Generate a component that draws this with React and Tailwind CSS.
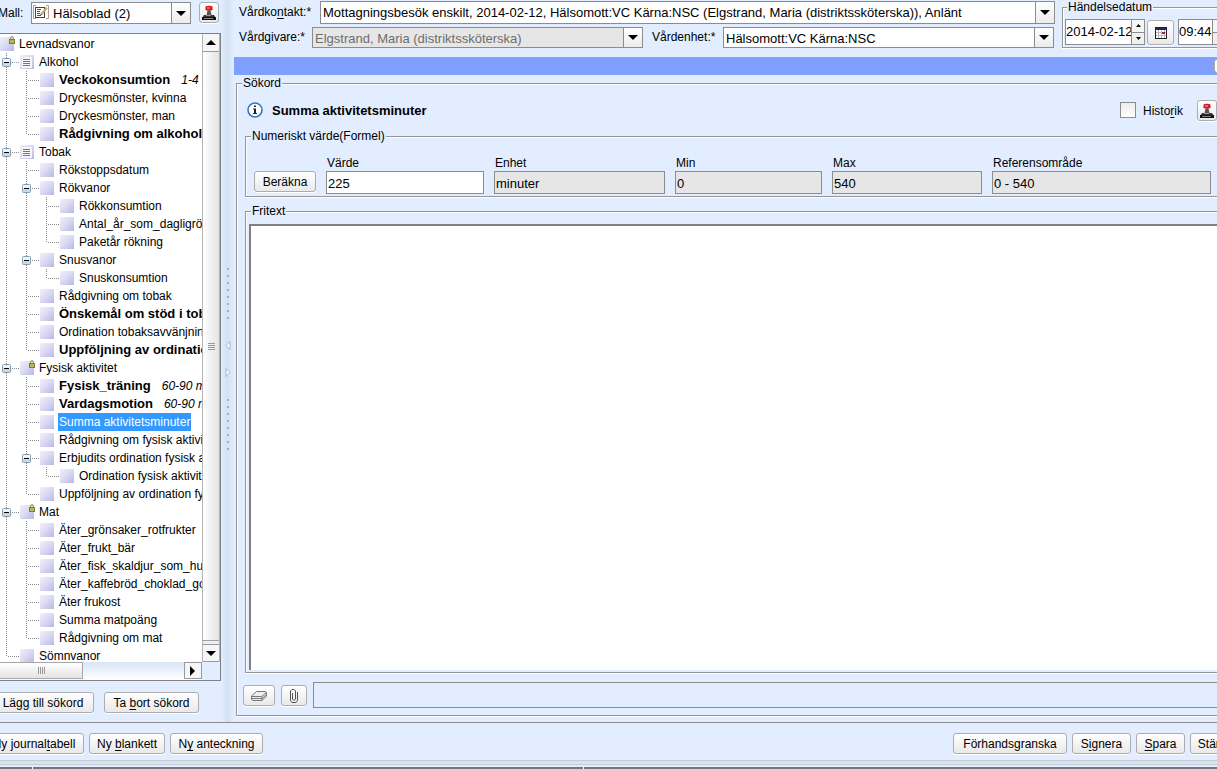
import React from "react";

const TREE = [
  { d: 0, t: "Levnadsvanor", icon: "lock" },
  { d: 1, t: "Alkohol", icon: "list", open: true },
  { d: 2, t: "Veckokonsumtion", bold: true, note: "1-4 glas" },
  { d: 2, t: "Dryckesmönster, kvinna" },
  { d: 2, t: "Dryckesmönster, man" },
  { d: 2, t: "Rådgivning om alkohol", bold: true },
  { d: 1, t: "Tobak", icon: "list", open: true },
  { d: 2, t: "Rökstoppsdatum" },
  { d: 2, t: "Rökvanor", open: true },
  { d: 3, t: "Rökkonsumtion" },
  { d: 3, t: "Antal_år_som_dagligrökare" },
  { d: 3, t: "Paketår rökning" },
  { d: 2, t: "Snusvanor", open: true },
  { d: 3, t: "Snuskonsumtion" },
  { d: 2, t: "Rådgivning om tobak" },
  { d: 2, t: "Önskemål om stöd i tobak", bold: true },
  { d: 2, t: "Ordination tobaksavvänjning" },
  { d: 2, t: "Uppföljning av ordination", bold: true },
  { d: 1, t: "Fysisk aktivitet", icon: "lock", open: true },
  { d: 2, t: "Fysisk_träning", bold: true, note: "60-90 min" },
  { d: 2, t: "Vardagsmotion", bold: true, note: "60-90 min" },
  { d: 2, t: "Summa aktivitetsminuter", selected: true },
  { d: 2, t: "Rådgivning om fysisk aktivitet" },
  { d: 2, t: "Erbjudits ordination fysisk aktivitet", open: true },
  { d: 3, t: "Ordination fysisk aktivitet" },
  { d: 2, t: "Uppföljning av ordination fysisk" },
  { d: 1, t: "Mat", icon: "lock", open: true },
  { d: 2, t: "Äter_grönsaker_rotfrukter" },
  { d: 2, t: "Äter_frukt_bär" },
  { d: 2, t: "Äter_fisk_skaldjur_som_huvudrätt" },
  { d: 2, t: "Äter_kaffebröd_choklad_godis" },
  { d: 2, t: "Äter frukost" },
  { d: 2, t: "Summa matpoäng" },
  { d: 2, t: "Rådgivning om mat" },
  { d: 1, t: "Sömnvanor" },
];

// True when a later sibling exists for the branch at the given level.
function continues(index, level) {
  for (let i = index + 1; i < TREE.length; i++) {
    if (TREE[i].d < level) return false;
    if (TREE[i].d === level) return true;
  }
  return false;
}

function Guide({ own, more, open }) {
  return (
    <svg width="20" height="18" viewBox="0 0 20 18" className="shrink-0" shapeRendering="crispEdges" aria-hidden="true">
      {(own || more) && (
        <path d={more ? "M6.5 0V18" : "M6.5 0V10"} stroke="#8a8a8a" strokeDasharray="1 1" />
      )}
      {own && <path d="M8 9.5H19" stroke="#8a8a8a" strokeDasharray="1 1" />}
      {open && (
        <g>
          <rect x="2.5" y="5.5" width="8" height="8" rx="1" fill="#f4f4f0" stroke="#7b9ebd" shapeRendering="auto" />
          <rect x="3" y="10" width="7" height="3" fill="#d8d6ce" />
          <path d="M4 9.5H9" stroke="#000" />
        </g>
      )}
    </svg>
  );
}

function NodeIcon({ kind }) {
  return (
    <svg width="15" height="18" viewBox="0 0 15 18" className="shrink-0" aria-hidden="true">
      <defs>
        <linearGradient id="node" x1="0" y1="0" x2="1" y2="1">
          <stop offset="0" stopColor="#f0f0fd" />
          <stop offset="0.5" stopColor="#d9d9f3" />
          <stop offset="1" stopColor="#b8b8e0" />
        </linearGradient>
      </defs>
      <rect x="0" y="2" width="14" height="14" fill="url(#node)" />
      {kind === "list" && (
        <g shapeRendering="crispEdges">
          <rect x="2" y="4" width="10" height="11" fill="#f5f5fa" />
          <path d="M3 6.5H10M3 8.5H10M3 10.5H10M3 12.5H10" stroke="#777" />
        </g>
      )}
      {kind === "lock" && (
        <g>
          <path d="M10.5 5.5V3.5Q10.5 1.5 12 1.5T13.5 3.5V5.5" fill="none" stroke="#8d8d55" />
          <rect x="9.5" y="4.5" width="5" height="4" fill="#b5b65c" stroke="#7e7e32" />
        </g>
      )}
    </svg>
  );
}

function Stamp() {
  return (
    <svg width="16" height="16" viewBox="0 0 16 16" className="shrink-0" aria-hidden="true">
      <path d="M4.500 1.500Q8 0 11.500 1.500V5Q8 6.500 4.500 5Z" fill="#d8141c" />
      <path d="M6 2H9V4H6Z" fill="#ff5a5a" />
      <path d="M6.500 5.500H9.500L10.500 10H5.500Z" fill="#555" />
      <path d="M3 10H13L14.500 12.500H1.500Z" fill="#333" />
      <path d="M5 10.500H10" stroke="#999" />
      <path d="M1 12H15V15H1Z" fill="#111" />
      <path d="M3 13.500H12" stroke="#888" />
    </svg>
  );
}

function Arrow({ dir = "down", small }) {
  const d = {
    down: "M0 0H10L5 5Z",
    up: "M0 5H10L5 0Z",
    right: "M2 0V10L7 5Z",
  }[dir];
  return (
    <svg
      width={small ? 5 : 10}
      height={dir === "right" ? 10 : small ? 3 : 5}
      viewBox={dir === "right" ? "0 0 10 10" : "0 0 10 5"}
      preserveAspectRatio="none"
      aria-hidden="true"
    >
      <path d={d} fill="#000" />
    </svg>
  );
}

function Combo({ id, value, disabled, icon, size = "h-[21px]", label }) {
  return (
    <div className={"flex min-w-0 flex-1 border border-[#8c8c8c] " + size + (disabled ? " bg-[#e6e6e6]" : " bg-white")}>
      {icon}
      <select
        id={id}
        aria-label={label}
        disabled={disabled}
        className={
          "min-w-0 flex-1 appearance-none bg-transparent pt-px pl-[2px] text-[13px] opacity-100 outline-none " +
          (disabled ? "text-[#6e6e6e]" : "text-black")
        }
      >
        <option>{value}</option>
      </select>
      <span className="pointer-events-none flex w-[19px] shrink-0 items-center justify-center border-l border-[#8c8c8c] bg-linear-to-b from-white to-[#ececec]">
        <Arrow />
      </span>
    </div>
  );
}

function Button({ children, className = "" }) {
  return (
    <button
      type="button"
      className={
        "flex h-[21px] shrink-0 items-center justify-center rounded-[3px] border border-[#adadad] bg-linear-to-b from-white to-[#e9e9e9] pt-px text-xs whitespace-nowrap shadow-[0_1px_0_#fff] " +
        className
      }
    >
      {children}
    </button>
  );
}

const U = ({ children }) => <span className="underline underline-offset-2">{children}</span>;

const GROUP =
  "min-w-0 border border-r-0 border-[#969696] shadow-[inset_1px_1px_0_#fff,0_1px_0_#fff]";
const LEGEND = "bg-[#e2eeff] px-px text-xs leading-[15px]";

function Field({ id, label, value, readOnly }) {
  return (
    <div className="flex min-w-0 flex-col">
      <label htmlFor={id} className="px-px pt-px text-xs leading-4">{label}</label>
      <input
        id={id}
        defaultValue={value}
        readOnly={readOnly}
        className={
          "h-[23px] w-full border border-[#8c8c8c] px-px pt-px text-[13px] outline-none " +
          (readOnly ? "bg-[#e6e6e6]" : "bg-white")
        }
      />
    </div>
  );
}

function Spinner() {
  return (
    <span className="flex w-[13px] shrink-0 flex-col border-l border-[#8c8c8c]">
      <button type="button" aria-label="Öka" className="flex flex-1 items-center justify-center bg-[#f6f6f6]">
        <Arrow dir="up" small />
      </button>
      <button type="button" aria-label="Minska" className="flex flex-1 items-center justify-center border-t border-[#8c8c8c] bg-[#f0f0f0]">
        <Arrow small />
      </button>
    </span>
  );
}

function Sidebar() {
  return (
    <aside className="flex w-[221px] shrink-0 flex-col">
      <div className="flex items-start pt-[2px]">
        <label htmlFor="mall" className="-ml-[2px] w-[33px] shrink-0 text-xs leading-[22px]">Mall:</label>
        <Combo
          id="mall"
          value="Hälsoblad (2)"
          size="h-[22px]"
          icon={
            <svg width="19" height="20" viewBox="0 0 19 20" className="shrink-0" aria-hidden="true">
              <path d="M4 2.500H1.500V15.500H4M14 2.500H16.500V15.500H14" fill="none" stroke="#b09a9a" />
              <rect x="3.500" y="4.500" width="9" height="10" fill="#fff" stroke="#444" />
              <path d="M5 6.500H9M5 8.500H8M5 10.500H8M5 12.500H8" stroke="#555" />
              <path d="M9 11.500L15 4.500" stroke="#d0a862" strokeWidth="2" />
              <path d="M8 13L9.500 11" stroke="#333" />
            </svg>
          }
        />
        <Button className="mr-[2px] ml-2 w-5">
          <Stamp />
        </Button>
      </div>

      <div className="mt-[9px] flex min-h-0 flex-1 flex-col border-t border-r border-b border-[#808088] bg-[#e2eeff]">
        <div className="flex min-h-0 flex-1">
          <ul className="min-w-0 flex-1 overflow-hidden bg-white pt-px">
            {TREE.map((n, i) => (
              <li key={n.t} className="flex h-[18px] items-center text-xs whitespace-nowrap">
                {Array.from({ length: n.d }, (_, k) => (
                  <Guide key={k} own={k + 1 === n.d} more={continues(i, k + 1)} open={k + 1 === n.d && n.open} />
                ))}
                <NodeIcon kind={n.icon} />
                <span
                  className={
                    "ml-[3px] px-px leading-[18px] " +
                    (n.bold ? "text-[13px] font-bold " : "") +
                    (n.selected ? "bg-[#3399ff] text-white" : "")
                  }
                >
                  {n.t}
                </span>
                {n.note && <em className="ml-[10px]">{n.note}</em>}
              </li>
            ))}
          </ul>
          <div className="flex w-[18px] flex-col border-x border-[#b4b4b4] bg-[#e8f0fa]">
            <button type="button" aria-label="Rulla upp" className="flex h-[18px] items-center justify-center border-b border-[#9a9a9a] bg-[#f6f6f6]">
              <Arrow dir="up" />
            </button>
            <div className="mb-[3px] flex flex-1 flex-col items-center justify-center gap-px border-b border-[#a0a0a0] bg-linear-to-r from-white to-[#e4e4e4]">
              <span className="h-px w-[7px] bg-[#999]" />
              <span className="h-px w-[7px] bg-[#999]" />
              <span className="h-px w-[7px] bg-[#999]" />
              <span className="h-px w-[7px] bg-[#999]" />
            </div>
            <button type="button" aria-label="Rulla ned" className="flex h-[18px] items-center justify-center border-y border-[#9a9a9a] bg-[#f6f6f6]">
              <Arrow />
            </button>
          </div>
        </div>
        <div className="mr-[18px] flex h-[18px] bg-linear-to-b from-[#d8e6f6] to-white">
          <div className="flex h-[17px] w-[83px] items-center justify-center gap-px border border-l-0 border-[#a8a8a8] bg-linear-to-b from-white to-[#e4e4e4]">
            <span className="h-[7px] w-px bg-[#999]" />
            <span className="h-[7px] w-px bg-[#999]" />
            <span className="h-[7px] w-px bg-[#999]" />
            <span className="h-[7px] w-px bg-[#999]" />
          </div>
          <span className="flex-1" />
          <button type="button" aria-label="Rulla höger" className="flex h-[17px] w-[18px] items-center justify-center border border-[#9a9a9a] bg-[#f6f6f6]">
            <Arrow dir="right" />
          </button>
        </div>
      </div>

      <div className="flex gap-[10px] pt-[11px] pb-[9px]">
        <Button className="-ml-2 w-[102px]">Lägg till sökord</Button>
        <Button className="w-[95px]"><span>Ta <U>b</U>ort sökord</span></Button>
      </div>
    </aside>
  );
}

function Dots({ n }) {
  return (
    <span className="flex flex-col gap-[5px]">
      {Array.from({ length: n }, (_, i) => (
        <span key={i} className="size-[2px] bg-[#a4b0c2]" />
      ))}
    </span>
  );
}

function Splitter() {
  return (
    <div className="flex w-[13px] shrink-0 flex-col items-center justify-center gap-5 bg-linear-to-r from-[#e2eeff] via-[#d3e1f3] to-[#e2eeff] pb-1">
      <Dots n={8} />
      <svg width="6" height="40" viewBox="0 0 6 40" fill="#fff" stroke="#a9b2bf" aria-hidden="true">
        <path d="M5 2.500V10.500L1 6.500Z" />
        <path d="M1 29.500V37.500L5 33.500Z" />
      </svg>
      <Dots n={8} />
    </div>
  );
}

function Header() {
  return (
    <div className="flex gap-[7px]">
      <div className="flex min-w-0 flex-1 flex-col gap-[3px] pt-px pl-[5px]">
        <div className="flex">
          <label htmlFor="kontakt" className="w-[81px] shrink-0 text-xs leading-[23px]">Vårdko<U>n</U>takt:*</label>
          <Combo
            id="kontakt"
            size="h-[23px]"
            value="Mottagningsbesök enskilt, 2014-02-12, Hälsomott:VC Kärna:NSC (Elgstrand, Maria (distriktssköterska)), Anlänt"
          />
        </div>
        <div className="flex pr-px">
          <label htmlFor="givare" className="w-[73px] shrink-0 text-xs leading-[21px]">Vårdgivare:*</label>
          <Combo id="givare" value="Elgstrand, Maria (distriktssköterska)" disabled />
          <label htmlFor="enhet-val" className="ml-[9px] w-[71px] shrink-0 text-xs leading-[21px]">Vårdenhet:*</label>
          <Combo id="enhet-val" value="Hälsomott:VC Kärna:NSC" />
        </div>
      </div>
      <fieldset className={GROUP + " h-[48px] w-[155px] shrink-0 pl-[2px]"}>
        <legend className={LEGEND + " ml-[2px]"}>Händelsedatum</legend>
        <div className="flex items-center pt-1">
          <span className="flex h-[26px] w-[80px] border border-[#8c8c8c] bg-white">
            <input aria-label="Datum" defaultValue="2014-02-12" className="min-w-0 flex-1 text-[13px] outline-none" />
            <Spinner />
          </span>
          <Button className="mx-[2px] h-[25px] w-[27px]">
            <svg width="12" height="12" viewBox="0 0 12 12" shapeRendering="crispEdges" aria-hidden="true">
              <rect x="0.500" y="0.500" width="11" height="11" fill="#fff" stroke="#222" />
              <path d="M0 1H12V3H0Z" fill="#26265a" />
              <path d="M1 5.500H11M1 8.500H11M3.500 3V11M6.500 3V11M9.500 3V11" stroke="#b9b9c8" />
              <path d="M7 5H10V7H7Z" fill="#b02020" />
            </svg>
          </Button>
          <span className="ml-[2px] flex h-[26px] w-[48px] shrink-0 border border-[#8c8c8c] bg-white">
            <input aria-label="Tid" defaultValue="09:44" className="min-w-0 flex-1 text-[13px] outline-none" />
            <Spinner />
          </span>
        </div>
      </fieldset>
    </div>
  );
}

function Keyword() {
  return (
    <fieldset className={GROUP + " mt-px mb-[6px] ml-[2px] flex min-h-0 flex-1 flex-col"}>
      <legend className={LEGEND + " ml-[5px]"}>Sökord</legend>
      <div className="flex h-[38px] shrink-0 items-center pl-[10px]">
        <svg width="16" height="16" viewBox="0 0 16 16" aria-hidden="true">
          <circle cx="8" cy="8" r="7" fill="#fff" stroke="#2f78c4" strokeWidth="1.600" />
          <path d="M7 3.500H9V5H7ZM6 6.500H9V11H10V12H6V11H7V7.500H6Z" fill="#222" />
        </svg>
        <h1 className="ml-[9px] flex-1 pt-[2px] text-[13px] font-bold">Summa aktivitetsminuter</h1>
        <input
          id="historik"
          type="checkbox"
          className="size-4 appearance-none border border-[#8c8c8c] bg-linear-to-b from-[#ececec] to-white"
        />
        <label htmlFor="historik" className="mr-[14px] ml-[7px] pt-[2px] text-xs">Histo<U>r</U>ik</label>
        <Button className="w-5">
          <Stamp />
        </Button>
      </div>

      <fieldset className={GROUP + " ml-2 shrink-0"}>
        <legend className={LEGEND + " ml-[5px]"}>Numeriskt värde(Formel)</legend>
        <div className="grid grid-cols-[62px_158fr_171fr_147fr_150fr_219fr] items-end gap-x-[10px] pt-[10px] pr-[6px] pb-[2px] pl-2">
          <Button className="mb-[2px]">Beräkna</Button>
          <Field id="varde" label="Värde" value="225" />
          <Field id="enhet" label="Enhet" value="minuter" readOnly />
          <Field id="min" label="Min" value="0" readOnly />
          <Field id="max" label="Max" value="540" readOnly />
          <Field id="ref" label="Referensområde" value="0 - 540" readOnly />
        </div>
      </fieldset>

      <fieldset className={GROUP + " mt-[7px] ml-2 flex min-h-0 flex-1 flex-col"}>
        <legend className={LEGEND + " ml-[5px]"}>Fritext</legend>
        <textarea
          aria-label="Fritext"
          className="mt-[5px] mb-[2px] ml-[3px] min-h-0 flex-1 resize-none border-t-2 border-l-2 border-[#808080] bg-white p-1 text-[13px] outline-none"
        />
      </fieldset>

      <div className="flex shrink-0 items-center pt-[9px] pb-[7px] pl-[6px]">
        <Button className="w-8">
          <svg width="18" height="12" viewBox="0 0 18 12" fill="none" stroke="#777" aria-hidden="true">
            <path d="M6.500 1.500H15.500L16.500 3V6L12 10.500H2.500L1.500 9V6Z" fill="#eee" />
            <path d="M1.500 6.500H11.500L16.500 2.500M1.500 8.500H12M12 6.500V10.500M12 8.500L16.500 4.500" />
          </svg>
        </Button>
        <Button className="mr-[6px] ml-[6px] w-[26px]">
          <svg width="10" height="16" viewBox="0 0 10 16" fill="none" stroke="#555" aria-hidden="true">
            <path d="M8.500 4V12.500L7 14.500H3L1.500 12.500V3L3 1.500H5L6.500 3V11L5 12.500L3.500 11V5" />
          </svg>
        </Button>
        <input aria-label="Bilaga" readOnly className="h-[26px] min-w-0 flex-1 border border-r-0 border-[#8c8c8c] bg-[#e2eeff] outline-none" />
      </div>
    </fieldset>
  );
}

export default function App() {
  return (
    <div className="flex h-screen flex-col overflow-hidden bg-[#e2eeff] font-['Liberation_Sans',Arial,sans-serif] text-black">
      <div className="flex min-h-0 flex-1">
        <Sidebar />
        <Splitter />
        <main className="flex min-w-0 flex-1 flex-col overflow-hidden">
          <Header />
          <div className="mt-[9px] flex h-[18px] shrink-0 items-center justify-end overflow-hidden bg-[#80a0ff]">
            <button type="button" aria-label="Visa" className="h-[14px] w-[3px] rounded-l-[3px] border border-r-0 border-[#adadad] bg-white" />
          </div>
          <Keyword />
        </main>
      </div>
      <footer className="shrink-0 border-t border-[#8c8c8c]">
        <div className="flex gap-[5px] overflow-hidden pt-[10px] pb-[6px]">
          <Button className="-ml-5 w-[104px] pl-1"><span>Ny journal<U>t</U>abell</span></Button>
          <Button className="w-[76px]"><span>Ny <U>b</U>lankett</span></Button>
          <Button className="w-[93px]"><span>N<U>y</U> anteckning</span></Button>
          <span className="flex-1" />
          <Button className="w-[114px]">Förhandsgranska</Button>
          <Button className="w-[59px]"><span>S<U>i</U>gnera</span></Button>
          <Button className="w-[49px]"><span><U>S</U>para</span></Button>
          <Button className="-mr-5 w-[47px]">Stäng</Button>
        </div>
        <div className="mb-[2px] h-[5px] border-y border-[#c3ccd8] bg-[#dae2ec]" />
        <div className="flex h-[2px] gap-px bg-white">
          <span className="w-8 bg-[#6f7782]" />
          <span className="w-[550px] bg-[#6f7782]" />
          <span className="flex-1 bg-[#6f7782]" />
        </div>
      </footer>
    </div>
  );
}
